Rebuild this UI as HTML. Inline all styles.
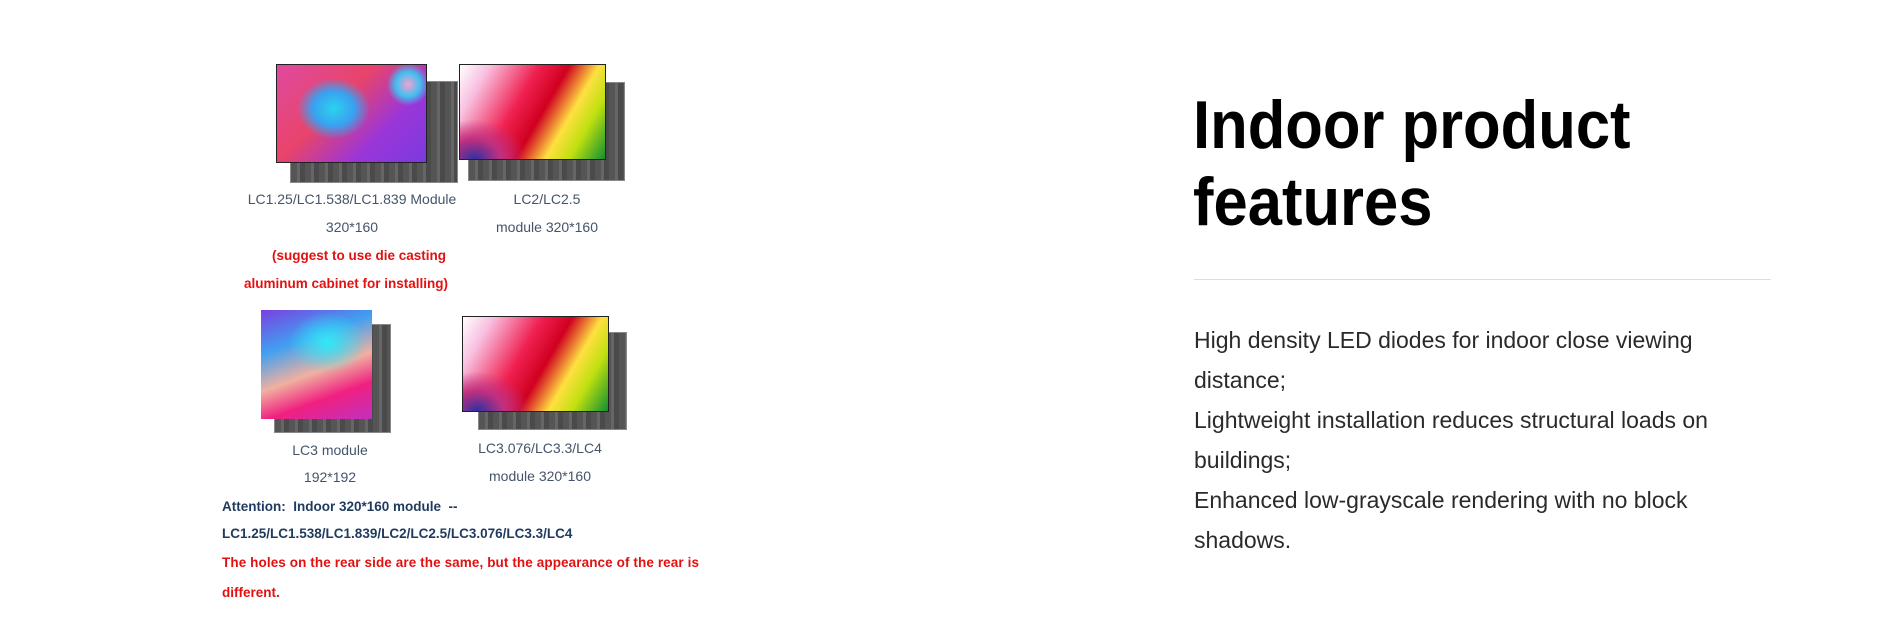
<!DOCTYPE html>
<html><head><meta charset="utf-8"><style>
body{margin:0;width:1893px;height:638px;background:#fff;position:relative;overflow:hidden;font-family:"Liberation Sans",sans-serif}
.a{position:absolute}
.back{position:absolute;background:repeating-linear-gradient(90deg,#555 0 6px,#666 6px 9px,#4a4a4a 9px 14px),#555;border:1px solid #888}
.scr{position:absolute;border:1.5px solid #222}
.g1{background:radial-gradient(ellipse 35% 45% at 38% 45%,#2ad3ee 0,#3aa0f0 40%,transparent 70%),radial-gradient(circle at 88% 20%,#f6a0d0 0,#40c0f0 8%,transparent 14%),linear-gradient(135deg,#e04aa0 0,#e8446a 40%,#9b36d8 70%,#7a3ae0 100%)}
.g2{background:radial-gradient(ellipse 60% 70% at 10% 100%,#3030a0 0,#c03080 30%,transparent 60%),linear-gradient(120deg,#fff 0,#f8c0e0 15%,#f02050 40%,#d00020 55%,#ffe040 70%,#c0e010 82%,#109030 100%)}
.g3{background:radial-gradient(ellipse 50% 40% at 60% 30%,#30e8f8 0,transparent 70%),linear-gradient(160deg,#7a40e0 0,#40a0f0 30%,#f0b0a0 55%,#f02080 75%,#c030c0 100%)}
.cap{position:absolute;color:#44546a;font-size:14px;text-align:center;transform:translateX(-50%);white-space:nowrap}
.red{position:absolute;color:#e31010;font-size:13.5px;font-weight:bold;white-space:nowrap}
.blue{position:absolute;color:#1f3a5f;font-size:13.5px;font-weight:bold;white-space:nowrap}
h1{position:absolute;left:1193px;top:87px;margin:0;font-size:68px;line-height:77px;font-weight:bold;color:#000;transform:scaleX(0.905);transform-origin:0 0;white-space:nowrap}
.p{position:absolute;left:1194px;top:320px;width:565px;font-size:23px;line-height:40px;color:#2a2a2a}
</style></head><body>
<div class="back" style="left:290px;top:81px;width:166px;height:100px"></div>
<div class="scr g1" style="left:276px;top:64px;width:149px;height:97px"></div>
<div class="back" style="left:468px;top:82px;width:155px;height:97px"></div>
<div class="scr g2" style="left:459px;top:64px;width:145px;height:94px"></div>
<div class="cap" style="left:352px;top:191px">LC1.25/LC1.538/LC1.839 Module</div>
<div class="cap" style="left:352px;top:219px">320*160</div>
<div class="cap" style="left:547px;top:191px">LC2/LC2.5</div>
<div class="cap" style="left:547px;top:219px">module 320*160</div>
<div class="red" style="left:272px;top:248px">(suggest to use die casting</div>
<div class="red" style="left:244px;top:276px">aluminum cabinet for installing)</div>
<div class="back" style="left:274px;top:324px;width:115px;height:107px"></div>
<div class="scr g3" style="left:261px;top:310px;width:111px;height:109px;border:none"></div>
<div class="back" style="left:478px;top:332px;width:147px;height:96px"></div>
<div class="scr g2" style="left:462px;top:316px;width:145px;height:94px"></div>
<div class="cap" style="left:330px;top:442px">LC3 module</div>
<div class="cap" style="left:330px;top:469px">192*192</div>
<div class="cap" style="left:540px;top:440px">LC3.076/LC3.3/LC4</div>
<div class="cap" style="left:540px;top:468px">module 320*160</div>
<div class="blue" style="left:222px;top:499px">Attention:&nbsp; Indoor 320*160 module&nbsp; --</div>
<div class="blue" style="left:222px;top:526px">LC1.25/LC1.538/LC1.839/LC2/LC2.5/LC3.076/LC3.3/LC4</div>
<div class="red" style="left:222px;top:555px;letter-spacing:0.1px">The holes on the rear side are the same, but the appearance of the rear is</div>
<div class="red" style="left:222px;top:585px">different.</div>
<h1>Indoor product<br>features</h1>
<div class="a" style="left:1194px;top:279px;width:577px;height:1px;background:#ddd"></div>
<div class="p">High density LED diodes for indoor close viewing distance;<br>Lightweight installation reduces structural loads on buildings;<br>Enhanced low-grayscale rendering with no block shadows.</div>
</body></html>
